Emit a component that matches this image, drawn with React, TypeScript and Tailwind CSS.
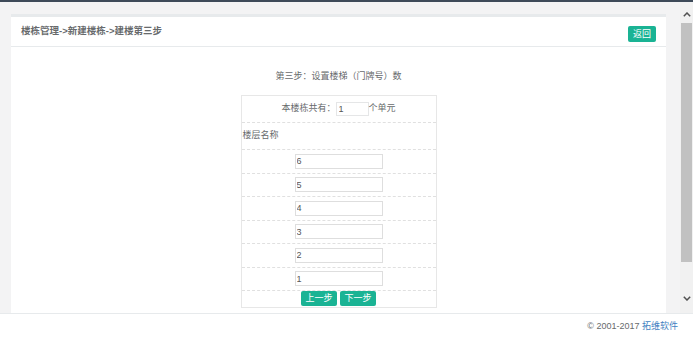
import React from "react"

const floors = ["6", "5", "4", "3", "2", "1"]

function Chevron({ up }: { up?: boolean }) {
  return (
    <svg width="8" height="5" viewBox="0 0 8 5" className={up ? "" : "rotate-180"}>
      <path d="M0.8 4.2 L4 1 L7.2 4.2" fill="none" stroke="#505050" strokeWidth="1.5" />
    </svg>
  )
}

export default function App() {
  return (
    <div
      className="w-[693px] h-[339px] flex flex-col bg-[#f3f3f4] overflow-hidden text-[#676a6c]"
      style={{ fontFamily: '"Liberation Sans", "Noto Sans CJK SC", sans-serif' }}
    >
      <div className="h-[2px] bg-[#3e4a59] shrink-0" />

      <div className="flex flex-1 min-h-0">
        {/* page area */}
        <div className="flex-1 min-w-0 pl-[11px] pr-[14px] pt-[12px]">
          <div className="h-full bg-white border-t-[3px] border-[#e7eaec] flex flex-col overflow-hidden">
            {/* header */}
            <div className="h-[30px] shrink-0 px-[10px] flex justify-between border-b border-[#e7eaec]">
              <div className="mt-[7px] leading-[14px] text-[9.5px] font-bold text-[#676a6c]">
                楼栋管理-&gt;新建楼栋-&gt;建楼第三步
              </div>
              <button className="mt-[9px] h-[16px] w-[28px] rounded-[2px] bg-[#1ab394] text-white text-[9px] leading-[16px] text-center">
                返回
              </button>
            </div>

            {/* body */}
            <div className="flex flex-col items-center">
              <div className="mt-[23px] leading-[12px] text-[9px]">第三步：设置楼梯（门牌号）数</div>

              <div className="mt-[13px] w-[196px] border border-[#e7e7e7] text-[9px]">
                <div className="h-[27px] flex items-center justify-center border-b border-dashed border-[#e0e0e0]">
                  <span>本楼栋共有：</span>
                  <input
                    defaultValue="1"
                    className="w-[33px] h-[14px] border border-[#e5e6e7] px-[2px] text-[9px] text-[#555] outline-none"
                  />
                  <span>个单元</span>
                </div>
                <div className="h-[27px] flex items-center px-[1px] border-b border-dashed border-[#e0e0e0]">
                  楼层名称
                </div>
                {floors.map((f) => (
                  <div
                    key={f}
                    className="h-[23.5px] flex items-center justify-center border-b border-dashed border-[#e0e0e0]"
                  >
                    <input
                      defaultValue={f}
                      className="w-[88px] h-[15px] border border-[#dedede] px-[1px] text-[9px] text-[#555] outline-none"
                    />
                  </div>
                ))}
                <div className="h-[16px] flex justify-center gap-[3px]">
                  <button className="w-[36px] h-[15px] rounded-[2px] bg-[#1ab394] text-white text-[9px] leading-[15px]">
                    上一步
                  </button>
                  <button className="w-[36px] h-[15px] rounded-[2px] bg-[#1ab394] text-white text-[9px] leading-[15px]">
                    下一步
                  </button>
                </div>
              </div>
            </div>
          </div>
        </div>

        {/* scrollbar */}
        <div className="w-[13px] shrink-0 bg-[#f1f1f1] flex flex-col">
          <div className="h-[21px] pt-[4px] flex items-center justify-center">
            <Chevron up />
          </div>
          <div className="h-[239px] mx-[1px] bg-[#c1c1c1]" />
          <div className="flex-1" />
          <div className="h-[21px] pb-[8px] flex items-center justify-center">
            <Chevron />
          </div>
        </div>
      </div>

      <div className="h-[26px] shrink-0 bg-white border-t border-[#e7eaec] flex items-center justify-end pr-[15px] text-[9px]">
        <span className="text-[#676a6c]">© 2001-2017&nbsp;</span>
        <span className="text-[#3f7fc1]">拓维软件</span>
      </div>
    </div>
  )
}
